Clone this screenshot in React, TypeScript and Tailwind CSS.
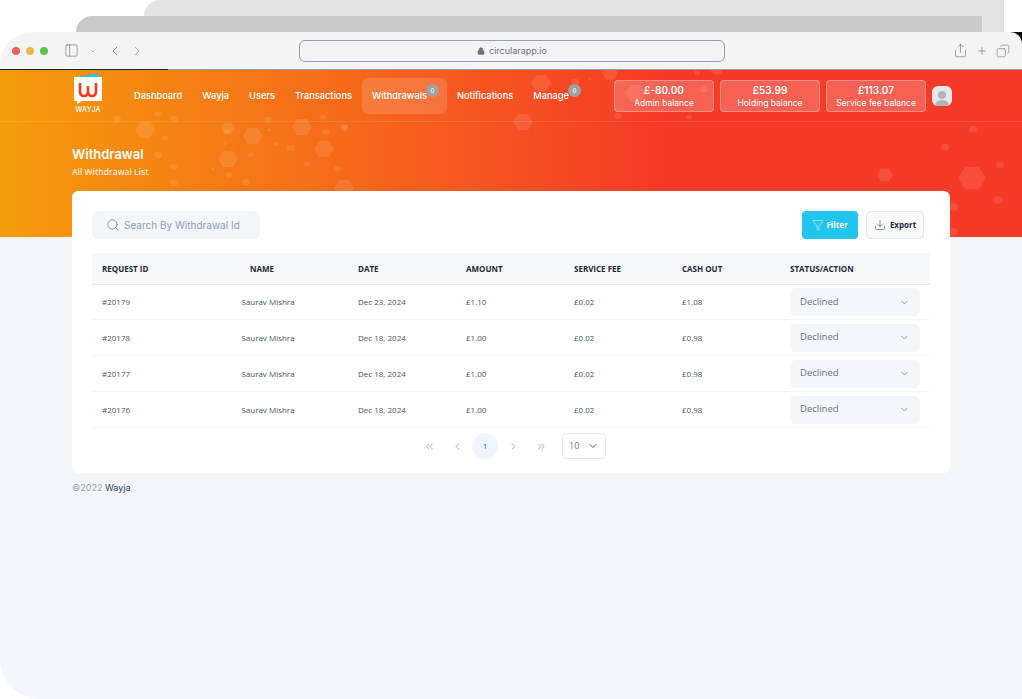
import React from "react";
import {
  ChevronDown,
  ChevronLeft,
  ChevronRight,
  ChevronsLeft,
  ChevronsRight,
  Copy,
  Download,
  Filter,
  Lock,
  PanelLeft,
  Plus,
  Search,
  Share,
} from "lucide-react";

const hexes = [
  [145, 130, 10], [253, 136, 10], [302, 127, 10], [324, 149, 10], [228, 159, 10], [344, 188, 10],
  [541, 83, 10], [523, 122, 10], [635, 93, 10], [972, 178, 14], [228, 128, 7], [885, 175, 8], [610, 73, 8],
];

const dots = [
  [165, 138, 3.5], [227, 132, 3.5], [269, 130, 2], [326, 132, 3.5], [344, 128, 4], [291, 148, 4],
  [251, 155, 3.5], [158, 155, 4], [174, 167, 3.5], [229, 175, 3.5], [307, 164, 3.5], [337, 169, 3.5],
  [174, 183, 4], [246, 182, 4], [225, 144, 1.5], [276, 144, 1.5], [213, 169, 1.5], [117, 119, 4],
  [158, 114, 3.5], [175, 119, 4], [268, 120, 4], [323, 117, 3.5], [575, 82, 4], [590, 79, 1.5],
  [618, 116, 4], [345, 127, 3], [717, 70, 6], [697, 73, 3], [704, 89, 4], [689, 117, 3], [973, 129, 4],
  [953, 207, 5], [998, 200, 5], [953, 232, 5], [945, 147, 4], [1000, 165, 4],
];

const navItems = ["Dashboard", "Wayja", "Users", "Transactions"];

const rows = [
  { id: "#20179", date: "Dec 23, 2024", amount: "£1.10", cash: "£1.08" },
  { id: "#20178", date: "Dec 18, 2024", amount: "£1.00", cash: "£0.98" },
  { id: "#20177", date: "Dec 18, 2024", amount: "£1.00", cash: "£0.98" },
  { id: "#20176", date: "Dec 18, 2024", amount: "£1.00", cash: "£0.98" },
];

const balances = [
  { value: "£-80.00", label: "Admin balance" },
  { value: "£53.99", label: "Holding balance" },
  { value: "£113.07", label: "Service fee balance" },
];

const columns = "grid grid-cols-[86px_180px_repeat(4,108px)_1fr] items-center";

function Hexagons() {
  return (
    <svg className="absolute inset-0 h-full w-full" viewBox="0 0 1022 168" fill="#fff">
      {hexes.map(([x, y, r]) => (
        <polygon
          key={`${x}-${y}`}
          opacity="0.1"
          points={`${x - r},${y - 69} ${x - r / 2},${y - 69 - r * 0.8} ${x + r / 2},${y - 69 - r * 0.8} ${x + r},${y - 69} ${x + r / 2},${y - 69 + r * 0.8} ${x - r / 2},${y - 69 + r * 0.8}`}
        />
      ))}
      {dots.map(([x, y, r]) => (
        <ellipse key={`${x}-${y}`} opacity="0.1" cx={x} cy={y - 69} rx={r} ry={r * 0.8} />
      ))}
    </svg>
  );
}

function Logo() {
  return (
    <div className="-mt-1.5 flex w-8 flex-col items-center gap-0.5">
      <svg width="28" height="31" viewBox="0 0 28 31">
        <path d="M3 4 L24 0 L25 5 L3 5 Z" fill="#29c4ee" />
        <path d="M0 4 H28 V28 H8 L3 31 V28 H0 Z" fill="#fff" />
        <path
          d="M6 11 V18 Q6 23 10 23 Q14 23 14 18 V13 V18 Q14 23 18 23 Q22 23 22 18 V11"
          fill="none"
          stroke="#f5391f"
          strokeWidth="2.6"
          strokeLinecap="round"
        />
      </svg>
      <span className="text-[7px] leading-none font-medium tracking-wide text-white">WAYJA</span>
    </div>
  );
}

function Badge() {
  return (
    <span className="absolute top-1.5 right-2 flex h-3.25 w-3.25 items-center justify-center rounded-full bg-neutral-400 text-[6px] text-white">
      0
    </span>
  );
}

function StatusSelect() {
  return (
    <div className="flex h-7 w-32.5 items-center justify-between rounded-md bg-[#f3f6fa] px-2.5 text-[9.5px] text-gray-500">
      Declined
      <ChevronDown size={11} strokeWidth={1.5} className="text-gray-500" />
    </div>
  );
}

export default function App() {
  return (
    <div className="flex h-screen flex-col overflow-hidden bg-white font-['Inter',sans-serif]">
      <div className="mr-4.5 ml-36 h-4 rounded-tl-2xl bg-[#e3e3e3]" />
      <div className="mr-4.5 ml-19 flex h-4">
        <div className="flex-1 rounded-tl-2xl bg-[#c9c9c9]" />
        <div className="w-5.5 bg-[#e3e3e3]" />
      </div>

      <div className="bg-linear-to-r from-white from-50% to-black to-50%">
        <div className="flex h-9.25 items-center rounded-tl-4xl rounded-tr-xl bg-[#f4f4f4] pr-3 pl-3 text-gray-500">
          <div className="flex gap-1.5">
            <span className="h-2 w-2 rounded-full bg-[#e86060]" />
            <span className="h-2 w-2 rounded-full bg-[#eeb84f]" />
            <span className="h-2 w-2 rounded-full bg-[#5fc452]" />
          </div>
          <PanelLeft size={15} strokeWidth={1} className="ml-4" />
          <ChevronDown size={8} className="ml-2.5 text-gray-400" />
          <ChevronLeft size={16} strokeWidth={1.25} className="ml-2.5" />
          <ChevronRight size={16} strokeWidth={1.25} className="ml-1.5 text-gray-400" />
          <div className="ml-38.5 flex h-5.5 w-106.5 items-center justify-center gap-1 rounded-md border border-gray-400 text-[9px] text-gray-500">
            <Lock size={8} fill="currentColor" />
            circularapp.io
          </div>
          <div className="ml-auto flex items-center gap-2">
            <Share size={15} strokeWidth={1} />
            <Plus size={12} strokeWidth={1.25} />
            <Copy size={14} strokeWidth={1} className="-scale-x-100" />
          </div>
        </div>
      </div>

      <div className="flex flex-1 flex-col rounded-bl-[40px] bg-[#f3f7fb]">
        <div className="relative h-42 bg-linear-to-r/srgb from-[#f59c0c] to-[#f63a28] to-65%">
          <Hexagons />
          <div className="relative flex h-px">
            <div className="w-42 bg-gray-800" />
            <div className="flex-1 bg-gray-400" />
          </div>
          <div className="relative flex h-13 items-center border-b border-white/10 pr-17.5 pl-18 text-[9.25px] font-medium text-white">
            <Logo />
            <nav className="ml-5 flex items-center">
              {navItems.map((item) => (
                <a key={item} className="px-2.5">
                  {item}
                </a>
              ))}
              <a className="relative flex h-9 items-center rounded-md bg-white/15 pr-5 pl-2.5">
                Withdrawals
                <Badge />
              </a>
              <a className="px-2.5">Notifications</a>
              <a className="relative flex h-9 items-center pr-5 pl-2.5">
                Manage
                <Badge />
              </a>
            </nav>
            <div className="ml-auto flex items-center gap-1.5">
              {balances.map((b) => (
                <div
                  key={b.label}
                  className="flex h-8 w-25 flex-col items-center justify-center rounded-sm border border-white/30 bg-white/20"
                >
                  <span className="text-[10px] leading-3.5 font-semibold">{b.value}</span>
                  <span className="text-[8.5px] leading-3 font-normal">{b.label}</span>
                </div>
              ))}
              <div className="flex h-5 w-5 items-end justify-center overflow-hidden rounded-md bg-gray-200">
                <svg width="16" height="17" viewBox="0 0 16 17" fill="#b4b4b4">
                  <circle cx="8" cy="6" r="4" />
                  <path d="M1 17 Q1 11 8 11 Q15 11 15 17 Z" />
                </svg>
              </div>
            </div>
          </div>
          <div className="relative mt-5.5 pl-18 text-white">
            <h1 className="text-[13px] leading-5 font-semibold">Withdrawal</h1>
            <p className="mt-0.5 font-['Open_Sans',sans-serif] text-[8.5px] font-semibold text-white/80">
              All Withdrawal List
            </p>
          </div>
        </div>

        <div className="relative mx-18 -mt-11.5 rounded-md bg-white px-5 pt-5 pb-3.5 font-['Open_Sans',sans-serif]">
          <div className="flex items-center justify-between pr-1.5">
            <div className="flex h-7 w-42 items-center gap-1 rounded-md bg-[#f3f6fa] pl-3.5 font-['Inter',sans-serif] text-[10px] text-slate-400">
              <Search size={14} strokeWidth={1.25} className="text-slate-500" />
              Search By Withdrawal Id
            </div>
            <div className="flex gap-2">
              <button className="flex h-7 w-14 items-center justify-center gap-0.5 rounded-sm bg-[#22c5ee] text-[8px] font-bold text-white">
                <Filter size={12} strokeWidth={1} />
                Filter
              </button>
              <button className="flex h-7 w-14.5 items-center justify-center gap-1 rounded-sm border border-gray-200 bg-gray-50 text-[8px] font-bold text-gray-800">
                <Download size={12} strokeWidth={1} />
                Export
              </button>
            </div>
          </div>

          <div className={`${columns} mt-3.5 h-8 border-b border-gray-200 bg-[#f6f8fa] text-[8px] font-bold text-gray-800`}>
            <span className="pl-2.5">REQUEST ID</span>
            <span className="pr-3 text-center">NAME</span>
            <span>DATE</span>
            <span>AMOUNT</span>
            <span>SERVICE FEE</span>
            <span>CASH OUT</span>
            <span>STATUS/ACTION</span>
          </div>
          {rows.map((row, i) => (
            <div key={row.id} className={`${columns} ${i === 0 ? "h-8.75" : "h-9"} border-b border-gray-100 text-[8px] text-gray-600`}>
              <span className="pl-2.5">{row.id}</span>
              <span className="text-center">Saurav Mishra</span>
              <span>{row.date}</span>
              <span>{row.amount}</span>
              <span>£0.02</span>
              <span>{row.cash}</span>
              <StatusSelect />
            </div>
          ))}

          <div className="mt-1.25 flex items-center justify-center gap-0.5 text-gray-400">
            <span className="flex h-6.5 w-6.5 items-center justify-center"><ChevronsLeft size={11} /></span>
            <span className="flex h-6.5 w-6.5 items-center justify-center"><ChevronLeft size={11} /></span>
            <span className="flex h-6.5 w-6.5 items-center justify-center rounded-full bg-blue-50 text-[8px] text-blue-600">1</span>
            <span className="flex h-6.5 w-6.5 items-center justify-center"><ChevronRight size={11} /></span>
            <span className="flex h-6.5 w-6.5 items-center justify-center"><ChevronsRight size={11} /></span>
            <span className="ml-1.5 flex h-6.5 w-11 items-center justify-between rounded-sm border border-gray-200 px-1.5 text-[9px] text-gray-500">
              10
              <ChevronDown size={12} className="text-gray-600" />
            </span>
          </div>
        </div>

        <p className="mt-2 pl-18 text-[9px] text-gray-400">
          ©2022 <span className="text-slate-700">Wayja</span>
        </p>
      </div>
    </div>
  );
}
